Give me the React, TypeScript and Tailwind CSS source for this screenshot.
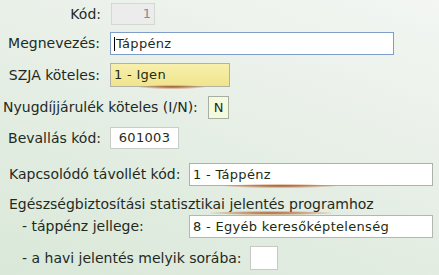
import React from "react";

const font = { fontFamily: '"DejaVu Sans", Verdana, sans-serif' };

function Glow({ className }: { className: string }) {
  return (
    <span
      className={`pointer-events-none absolute h-[4px] rounded-full bg-[radial-gradient(ellipse_at_center,rgba(160,70,20,0.85)_0%,rgba(190,110,50,0.35)_55%,transparent_75%)] ${className}`}
    />
  );
}

export default function App() {
  return (
    <div
      style={font}
      className="w-[439px] h-[275px] overflow-hidden bg-[linear-gradient(200deg,#f3f6f3_0%,#e7efe6_45%,#d9e8d8_100%)] text-[14px] text-[#1f2a1f] whitespace-nowrap"
    >
      <div className="flex flex-col pt-[3px]">
        {/* Kód */}
        <div className="flex items-center h-[22px]">
          <span className="w-[101px] text-right">Kód:</span>
          <div className="ml-[10px] w-[44px] h-[22px] border border-[#d3d8d3] bg-[#ececec] text-right pr-[3px] text-[13px] text-[#8a8a8a] leading-[20px]">
            1
          </div>
        </div>

        {/* Megnevezés */}
        <div className="flex items-center h-[23px] mt-[7px]">
          <span className="w-[100px] text-right">Megnevezés:</span>
          <div className="ml-[10px] w-[284px] h-[23px] border border-[#7e9dc9] bg-white pl-[3px] text-[13px] tracking-[0.3px] leading-[21px] flex items-center">
            <span className="w-px h-[14px] bg-black mr-px" />
            Táppénz
          </div>
        </div>

        {/* SZJA */}
        <div className="flex items-center h-[24px] mt-[8px]">
          <span className="w-[100px] text-right">SZJA köteles:</span>
          <div className="relative ml-[10px] w-[120px] h-[24px] border border-[#b2b2a6] bg-[linear-gradient(180deg,#f7f0ac_0%,#f1e48e_100%)] pl-[3px] text-[13px] tracking-[0.3px] leading-[22px] text-[#222b12]">
            1 - Igen
            <Glow className="left-[28px] w-[66px] -bottom-[3px]" />
          </div>
        </div>

        {/* Nyugdíj */}
        <div className="flex items-center h-[23px] mt-[9px]">
          <span className="pl-[3px]">Nyugdíjjárulék köteles (I/N):</span>
          <div className="ml-auto mr-[210px] shrink-0 w-[21px] h-[23px] border border-[#a8aea4] bg-[#f3fbdc] text-center text-[13px] leading-[21px]">
            N
          </div>
        </div>

        {/* Bevallás kód */}
        <div className="flex items-center h-[22px] mt-[8px]">
          <span className="w-[101px] text-right">Bevallás kód:</span>
          <div className="ml-[9px] w-[69px] h-[22px] border border-[#c9cdc9] bg-white text-center text-[13px] tracking-[0.3px] leading-[20px]">
            601003
          </div>
        </div>

        {/* Kapcsolódó */}
        <div className="flex items-center h-[23px] mt-[14px]">
          <span className="pl-[9px]">Kapcsolódó távollét kód:</span>
          <div className="relative ml-auto mr-[6px] shrink-0 w-[244px] h-[23px] border border-[#aeb0ae] bg-white pl-[3px] text-[13px] tracking-[0.3px] leading-[21px] text-[#1d2b14]">
            1 - Táppénz
            <Glow className="left-[34px] w-[112px] -bottom-[3px]" />
          </div>
        </div>

        {/* Heading */}
        <div className="relative h-[18px] mt-[9px] pl-[9px] leading-[18px]">
          Egészségbiztosítási statisztikai jelentés programhoz
          <Glow className="left-[210px] w-[122px] top-[16px]" />
        </div>

        {/* táppénz jellege */}
        <div className="flex items-center h-[23px] mt-[2px]">
          <span className="pl-[22px]">- táppénz jellege:</span>
          <div className="ml-auto mr-[6px] shrink-0 w-[244px] h-[23px] border border-[#b4b6b4] bg-white pl-[3px] text-[13px] tracking-[0.3px] leading-[21px] text-[#1d2b14]">
            8 - Egyéb keresőképtelenség
          </div>
        </div>

        {/* havi jelentés */}
        <div className="flex items-center h-[24px] mt-[8px]">
          <span className="pl-[22px]">- a havi jelentés melyik sorába:</span>
          <div className="ml-auto mr-[161px] shrink-0 w-[28px] h-[24px] border border-[#c6c9c6] bg-white" />
        </div>
      </div>
    </div>
  );
}
